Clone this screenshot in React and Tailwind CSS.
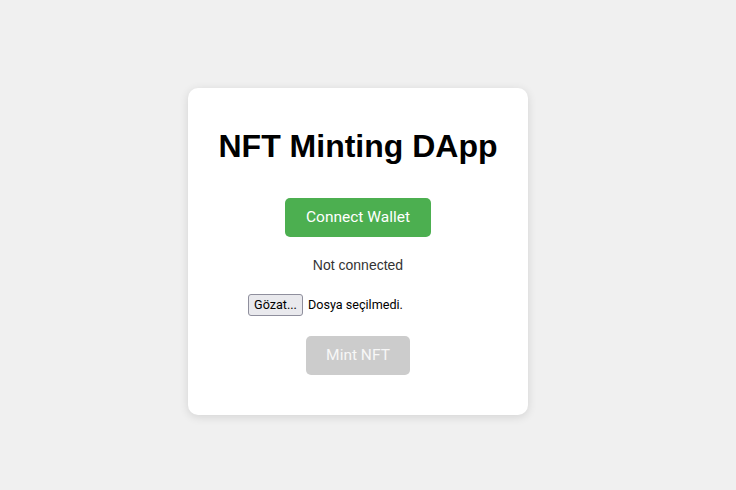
export default function App() {
  return (
    <div className="min-h-[490px] w-full bg-[#f0f0f0] pl-[188px] pt-[88px]">
      <div className="flex w-[340px] flex-col items-center rounded-[10px] bg-white pb-[40px] pt-[40px] shadow-[0_2px_10px_rgba(0,0,0,0.12)]">
        <h1 className="font-['Liberation_Sans',Arial,sans-serif] text-[32px] font-bold leading-[37px] text-black">
          NFT Minting DApp
        </h1>

        <button className="mt-[33px] h-[39px] w-[146px] rounded-[5px] bg-[#4caf50] font-['Roboto',sans-serif] text-[15.5px] text-white">
          Connect Wallet
        </button>

        <p className="mt-[20px] font-['Liberation_Sans',Arial,sans-serif] text-[14px] leading-[16px] text-[#333]">
          Not connected
        </p>

        {/* native-looking file input */}
        <div className="mt-[21px] flex h-[22px] w-[220px] items-center gap-[5px] font-['Roboto',sans-serif] text-[12.6px] text-black">
          <span className="flex h-[22px] w-[55px] items-center justify-center rounded-[3px] border border-[#8f8f9d] bg-[#e9e9ed]">
            Gözat...
          </span>
          <span>Dosya seçilmedi.</span>
        </div>

        <button
          disabled
          className="mt-[20px] h-[39px] w-[104px] rounded-[5px] bg-[#cccccc] font-['Roboto',sans-serif] text-[15.5px] text-[#f7f7f7]"
        >
          Mint NFT
        </button>
      </div>
    </div>
  )
}
